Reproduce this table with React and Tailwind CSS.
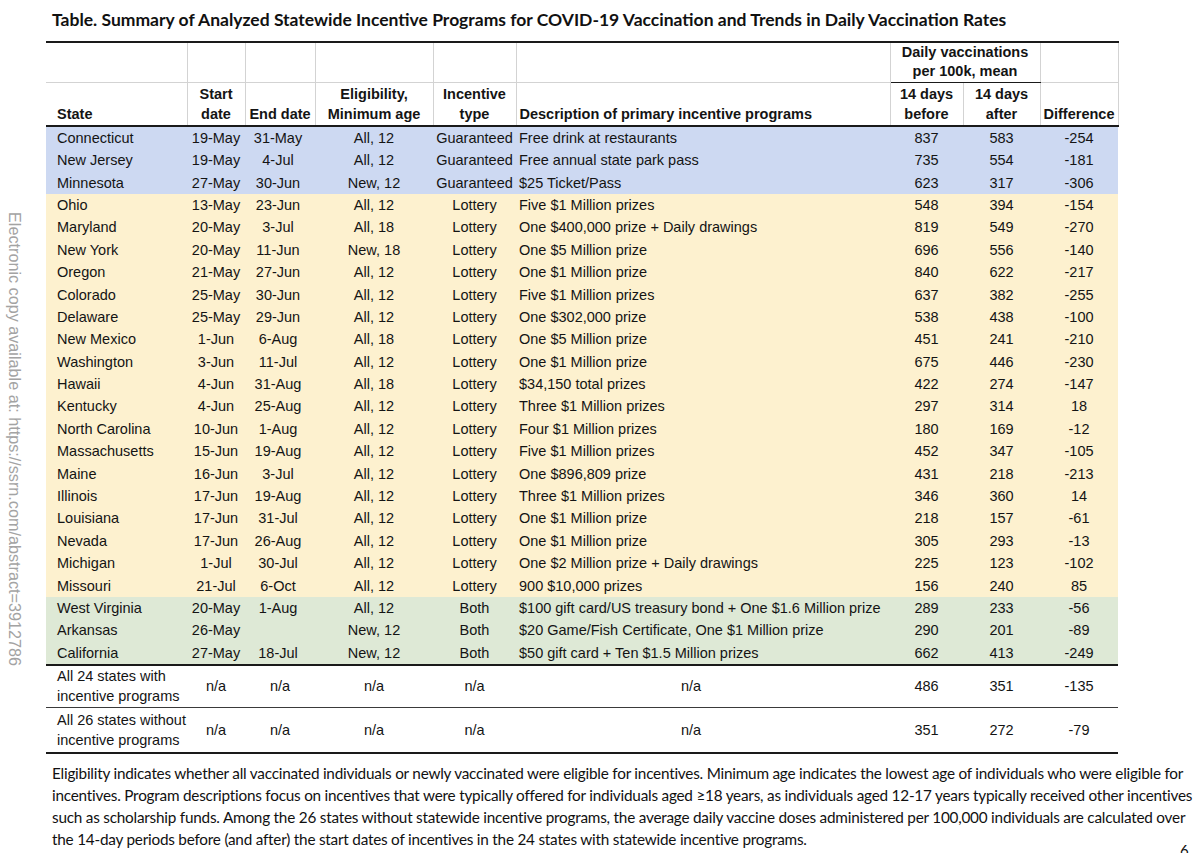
import React from "react";

const BLUE = "bg-[#cdd9f2]";
const YELLOW = "bg-[#fdf1cf]";
const GREEN = "bg-[#dee9d6]";

const rows = [
  ["Connecticut", "19-May", "31-May", "All, 12", "Guaranteed", "Free drink at restaurants", "837", "583", "-254", BLUE],
  ["New Jersey", "19-May", "4-Jul", "All, 12", "Guaranteed", "Free annual state park pass", "735", "554", "-181", BLUE],
  ["Minnesota", "27-May", "30-Jun", "New, 12", "Guaranteed", "$25 Ticket/Pass", "623", "317", "-306", BLUE],
  ["Ohio", "13-May", "23-Jun", "All, 12", "Lottery", "Five $1 Million prizes", "548", "394", "-154", YELLOW],
  ["Maryland", "20-May", "3-Jul", "All, 18", "Lottery", "One $400,000 prize + Daily drawings", "819", "549", "-270", YELLOW],
  ["New York", "20-May", "11-Jun", "New, 18", "Lottery", "One $5 Million prize", "696", "556", "-140", YELLOW],
  ["Oregon", "21-May", "27-Jun", "All, 12", "Lottery", "One $1 Million prize", "840", "622", "-217", YELLOW],
  ["Colorado", "25-May", "30-Jun", "All, 12", "Lottery", "Five $1 Million prizes", "637", "382", "-255", YELLOW],
  ["Delaware", "25-May", "29-Jun", "All, 12", "Lottery", "One $302,000 prize", "538", "438", "-100", YELLOW],
  ["New Mexico", "1-Jun", "6-Aug", "All, 18", "Lottery", "One $5 Million prize", "451", "241", "-210", YELLOW],
  ["Washington", "3-Jun", "11-Jul", "All, 12", "Lottery", "One $1 Million prize", "675", "446", "-230", YELLOW],
  ["Hawaii", "4-Jun", "31-Aug", "All, 18", "Lottery", "$34,150 total prizes", "422", "274", "-147", YELLOW],
  ["Kentucky", "4-Jun", "25-Aug", "All, 12", "Lottery", "Three $1 Million prizes", "297", "314", "18", YELLOW],
  ["North Carolina", "10-Jun", "1-Aug", "All, 12", "Lottery", "Four $1 Million prizes", "180", "169", "-12", YELLOW],
  ["Massachusetts", "15-Jun", "19-Aug", "All, 12", "Lottery", "Five $1 Million prizes", "452", "347", "-105", YELLOW],
  ["Maine", "16-Jun", "3-Jul", "All, 12", "Lottery", "One $896,809 prize", "431", "218", "-213", YELLOW],
  ["Illinois", "17-Jun", "19-Aug", "All, 12", "Lottery", "Three $1 Million prizes", "346", "360", "14", YELLOW],
  ["Louisiana", "17-Jun", "31-Jul", "All, 12", "Lottery", "One $1 Million prize", "218", "157", "-61", YELLOW],
  ["Nevada", "17-Jun", "26-Aug", "All, 12", "Lottery", "One $1 Million prize", "305", "293", "-13", YELLOW],
  ["Michigan", "1-Jul", "30-Jul", "All, 12", "Lottery", "One $2 Million prize + Daily drawings", "225", "123", "-102", YELLOW],
  ["Missouri", "21-Jul", "6-Oct", "All, 12", "Lottery", "900 $10,000 prizes", "156", "240", "85", YELLOW],
  ["West Virginia", "20-May", "1-Aug", "All, 12", "Both", "$100 gift card/US treasury bond + One $1.6 Million prize", "289", "233", "-56", GREEN],
  ["Arkansas", "26-May", "", "New, 12", "Both", "$20 Game/Fish Certificate, One $1 Million prize", "290", "201", "-89", GREEN],
  ["California", "27-May", "18-Jul", "New, 12", "Both", "$50 gift card + Ten $1.5 Million prizes", "662", "413", "-249", GREEN],
];

const summary = [
  ["All 24 states with", "incentive programs", "486", "351", "-135", "h-[43px] border-b-[1.5px] border-[#3a3a3a]"],
  ["All 26 states without", "incentive programs", "351", "272", "-79", "h-[45px] border-b-2 border-[#1a1a1a]"],
];

const hcell = "border-r border-[#d3d3d3] align-bottom px-0 leading-[20px] font-bold";

export default function App() {
  return (
    <div className="relative w-[1200px] h-[853px] overflow-hidden bg-white text-[#111]">
      <div className="absolute left-[5px] top-[212px] [writing-mode:vertical-rl] text-[16.2px] text-[#a3a3a3] font-['Liberation_Sans',Arial,sans-serif] leading-[20px]">
        Electronic copy available at: https://ssrn.com/abstract=3912786
      </div>

      <h1 className="pl-[52px] pt-[7px] h-[41px] text-[17.5px] leading-[26px] font-bold font-['Lato',sans-serif] whitespace-nowrap">
        Table. Summary of Analyzed Statewide Incentive Programs for COVID-19 Vaccination and Trends in Daily Vaccination Rates
      </h1>

      <table className="ml-[46px] w-[1072px] table-fixed border-collapse text-[14.5px] font-['Liberation_Sans',Arial,sans-serif] text-[#141414]">
        <colgroup>
          <col className="w-[141px]" />
          <col className="w-[58px]" />
          <col className="w-[70px]" />
          <col className="w-[118px]" />
          <col className="w-[83px]" />
          <col className="w-[374px]" />
          <col className="w-[73px]" />
          <col className="w-[77px]" />
          <col className="w-[78px]" />
        </colgroup>
        <thead>
          <tr className="h-[40px] border-t-2 border-[#1a1a1a]">
            <th className="border-r border-b border-[#d3d3d3]"></th>
            <th className="border-r border-b border-[#d3d3d3]"></th>
            <th className="border-r border-b border-[#d3d3d3]"></th>
            <th className="border-r border-b border-[#d3d3d3]"></th>
            <th className="border-r border-b border-[#d3d3d3]"></th>
            <th className="border-r border-b border-[#d3d3d3]"></th>
            <th colSpan={2} className="border-r border-[#d3d3d3] border-b-[1.5px] border-b-[#1a1a1a] font-bold leading-[19px] text-center align-middle">
              Daily vaccinations
              <br />
              per 100k, mean
            </th>
            <th className="border-r border-b border-[#d3d3d3]"></th>
          </tr>
          <tr className="h-[44px] border-b-2 border-[#1a1a1a]">
            <th className={`${hcell} text-left pl-[11px] pb-[1px]`}>State</th>
            <th className={`${hcell} text-center pb-[1px]`}>
              Start
              <br />
              date
            </th>
            <th className={`${hcell} text-center pb-[1px]`}>End date</th>
            <th className={`${hcell} text-center pb-[1px]`}>
              Eligibility,
              <br />
              Minimum age
            </th>
            <th className={`${hcell} text-center pb-[1px]`}>
              Incentive
              <br />
              type
            </th>
            <th className={`${hcell} text-left pl-[3px] pb-[1px]`}>Description of primary incentive programs</th>
            <th className={`${hcell} text-center pb-[1px]`}>
              14 days
              <br />
              before
            </th>
            <th className={`${hcell} text-center pb-[1px]`}>
              14 days
              <br />
              after
            </th>
            <th className={`${hcell} text-center pb-[1px]`}>Difference</th>
          </tr>
        </thead>
        <tbody>
          {rows.map((r, i) => (
            <tr
              key={r[0]}
              className={`${r[9]} h-[22.4px] leading-[22px] ${i === rows.length - 1 ? "border-b-2 border-[#1a1a1a]" : ""}`}
            >
              <td className="pl-[11px] p-0 whitespace-nowrap">{r[0]}</td>
              <td className="text-center p-0">{r[1]}</td>
              <td className="text-center p-0 pr-[4px]">{r[2]}</td>
              <td className="text-center p-0">{r[3]}</td>
              <td className="text-center p-0">{r[4]}</td>
              <td className="pl-[3px] p-0 whitespace-nowrap">{r[5]}</td>
              <td className="text-center p-0">{r[6]}</td>
              <td className="text-center p-0">{r[7]}</td>
              <td className="text-center p-0">{r[8]}</td>
            </tr>
          ))}
          {summary.map((s) => (
            <tr key={s[0]} className={`${s[5]} leading-[20px]`}>
              <td className="pl-[11px] p-0 whitespace-nowrap">
                {s[0]}
                <br />
                {s[1]}
              </td>
              <td className="text-center p-0">n/a</td>
              <td className="text-center p-0">n/a</td>
              <td className="text-center p-0">n/a</td>
              <td className="text-center p-0">n/a</td>
              <td className="text-center p-0 pr-[24px]">n/a</td>
              <td className="text-center p-0">{s[2]}</td>
              <td className="text-center p-0">{s[3]}</td>
              <td className="text-center p-0">{s[4]}</td>
            </tr>
          ))}
        </tbody>
      </table>

      <div className="pl-[52px] pt-[8px] text-[15.3px] leading-[22px] font-['Lato',sans-serif] text-[#111] tracking-[-0.22px] whitespace-nowrap">
        <p>Eligibility indicates whether all vaccinated individuals or newly vaccinated were eligible for incentives. Minimum age indicates the lowest age of individuals who were eligible for</p>
        <p>incentives. Program descriptions focus on incentives that were typically offered for individuals aged ≥18 years, as individuals aged 12-17 years typically received other incentives</p>
        <p>such as scholarship funds. Among the 26 states without statewide incentive programs, the average daily vaccine doses administered per 100,000 individuals are calculated over</p>
        <p>the 14-day periods before (and after) the start dates of incentives in the 24 states with statewide incentive programs.</p>
      </div>

      <div className="absolute left-[1180px] top-[840px] text-[15px] font-['Lato',sans-serif] leading-[20px]">6</div>
    </div>
  );
}
